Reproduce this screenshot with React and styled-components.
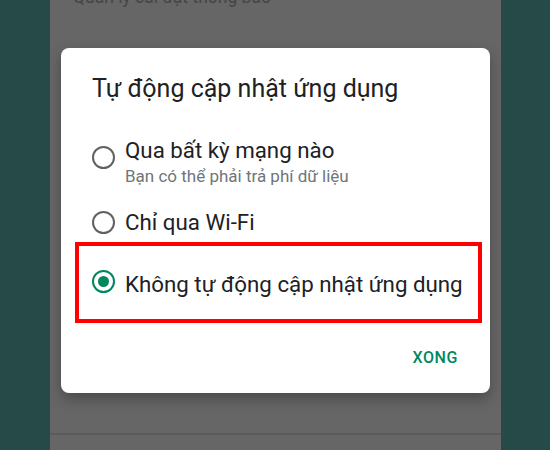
import React from "react";
import styled, { createGlobalStyle } from "styled-components";

const GlobalStyle = createGlobalStyle`
  html, body {
    margin: 0;
    padding: 0;
    background: #254a48;
    font-family: Roboto, "Noto Sans", "Liberation Sans", sans-serif;
  }
`;

const Page = styled.div`
  width: 550px;
  height: 450px;
  display: flex;
  background: #254a48;
  overflow: hidden;
`;

const Side = styled.div`
  width: ${(p) => p.w}px;
  flex-shrink: 0;
`;

const Screen = styled.div`
  width: 451px;
  height: 450px;
  background: #666666;
  display: flex;
  flex-direction: column;
  overflow: hidden;
`;

const FadedHeader = styled.div`
  margin-top: -13px;
  padding-left: 23px;
  height: 20px;
  line-height: 20px;
  font-size: 17.5px;
  color: #454545;
  white-space: nowrap;
`;

const Dialog = styled.div`
  margin: 41px 0 0 11px;
  width: 429px;
  height: 345px;
  box-sizing: border-box;
  background: #fff;
  border-radius: 8px;
  box-shadow: 0 6px 14px rgba(0, 0, 0, 0.28);
  padding-top: 27px;
  display: flex;
  flex-direction: column;
`;

const Title = styled.h2`
  margin: 0;
  padding-left: 31px;
  font-size: 25px;
  line-height: 28px;
  font-weight: 400;
  color: #202124;
  white-space: nowrap;
`;

const Option = styled.label`
  display: flex;
  align-items: ${(p) => (p.$center ? "center" : "flex-start")};
  gap: 10px;
  padding-left: 31px;
  margin-top: ${(p) => p.$mt || 0}px;
`;

const Highlight = styled.div`
  margin: 8px 8px 0 14px;
  height: 81px;
  box-sizing: border-box;
  border: 4px solid #ff0000;
  padding: 3px 0 0 13px;
  display: flex;
  align-items: center;
  gap: 10px;
`;

const Radio = styled.span`
  width: 23px;
  height: 23px;
  box-sizing: border-box;
  flex-shrink: 0;
  border-radius: 50%;
  border: 2.5px solid ${(p) => (p.$checked ? "#01875f" : "#616161")};
  margin-top: ${(p) => p.$mt || 0}px;
  display: flex;
  align-items: center;
  justify-content: center;
  &::after {
    content: "";
    display: ${(p) => (p.$checked ? "block" : "none")};
    width: 11px;
    height: 11px;
    border-radius: 50%;
    background: #01875f;
  }
`;

const TextCol = styled.div`
  display: flex;
  flex-direction: column;
`;

const Primary = styled.span`
  font-size: 22.3px;
  line-height: 24px;
  color: #202124;
  white-space: nowrap;
`;

const Secondary = styled.span`
  margin-top: 4px;
  font-size: 17px;
  line-height: 20px;
  color: #70757a;
  white-space: nowrap;
`;

const Actions = styled.div`
  display: flex;
  justify-content: flex-end;
  padding-right: 32px;
  margin-top: 25px;
`;

const TextButton = styled.button`
  border: none;
  background: none;
  padding: 0;
  font-family: inherit;
  font-size: 16px;
  line-height: 20px;
  font-weight: 500;
  letter-spacing: 0.6px;
  color: #01875f;
  cursor: pointer;
`;

const Divider = styled.div`
  margin-top: 40px;
  height: 2px;
  background: #5b5b5b;
`;

export default function App() {
  return (
    <>
      <GlobalStyle />
      <Page>
        <Side w={50} />
        <Screen>
          <FadedHeader>Quản lý cài đặt thông báo</FadedHeader>
          <Dialog>
            <Title>Tự động cập nhật ứng dụng</Title>
            <Option $mt={35}>
              <Radio $mt={8} />
              <TextCol>
                <Primary>Qua bất kỳ mạng nào</Primary>
                <Secondary>Bạn có thể phải trả phí dữ liệu</Secondary>
              </TextCol>
            </Option>
            <Option $mt={24} $center>
              <Radio />
              <Primary>Chỉ qua Wi-Fi</Primary>
            </Option>
            <Highlight>
              <Radio $checked $mt={-5} />
              <Primary>Không tự động cập nhật ứng dụng</Primary>
            </Highlight>
            <Actions>
              <TextButton>XONG</TextButton>
            </Actions>
          </Dialog>
          <Divider />
        </Screen>
        <Side w={49} />
      </Page>
    </>
  );
}
